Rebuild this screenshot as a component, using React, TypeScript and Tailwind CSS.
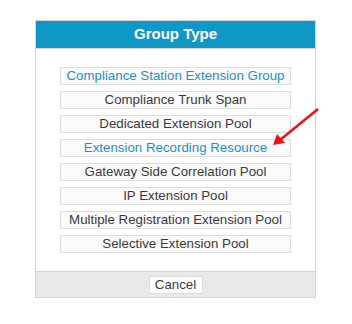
import React from "react";

const groupTypes = [
  { label: "Compliance Station Extension Group", active: true },
  { label: "Compliance Trunk Span" },
  { label: "Dedicated Extension Pool" },
  { label: "Extension Recording Resource", active: true },
  { label: "Gateway Side Correlation Pool" },
  { label: "IP Extension Pool" },
  { label: "Multiple Registration Extension Pool" },
  { label: "Selective Extension Pool" },
];

export default function App() {
  return (
    <div
      className="relative w-[352px] h-[324px] bg-white pt-[20px] pl-[35px]"
      style={{ fontFamily: '"Liberation Sans", Arial, sans-serif' }}
    >
      <div className="w-[281px] border border-[#d3d3d3] bg-white">
        <div className="h-[28px] flex items-center justify-center bg-[#0f98c6] text-white font-bold text-[15px] border-b border-[#d3d3d3]">
          Group Type
        </div>
        <div className="flex flex-col items-center gap-[6px] pt-[18px] pb-[18px]">
          {groupTypes.map((g) => (
            <button
              key={g.label}
              className={`w-[231px] h-[18px] flex items-center justify-center border border-[#dcdcdc] bg-[#fbfbfb] text-[13.3px] leading-none ${
                g.active ? "text-[#1a91c9]" : "text-[#3a3a3a]"
              }`}
            >
              {g.label}
            </button>
          ))}
        </div>
        <div className="h-[26px] flex items-center justify-center bg-[#e9e9e9] border-t border-[#d3d3d3]">
          <button className="w-[54px] h-[18px] flex items-center justify-center bg-white border border-[#dcdcdc] text-[13.3px] text-[#3a3a3a] leading-none">
            Cancel
          </button>
        </div>
      </div>
      <svg
        className="absolute left-0 top-0 pointer-events-none"
        width="352"
        height="324"
        viewBox="0 0 352 324"
      >
        <line x1="318" y1="109" x2="280" y2="140" stroke="#ee1111" strokeWidth="2.5" />
        <polygon points="273,145 277,134 285,143" fill="#ee1111" />
      </svg>
    </div>
  );
}
